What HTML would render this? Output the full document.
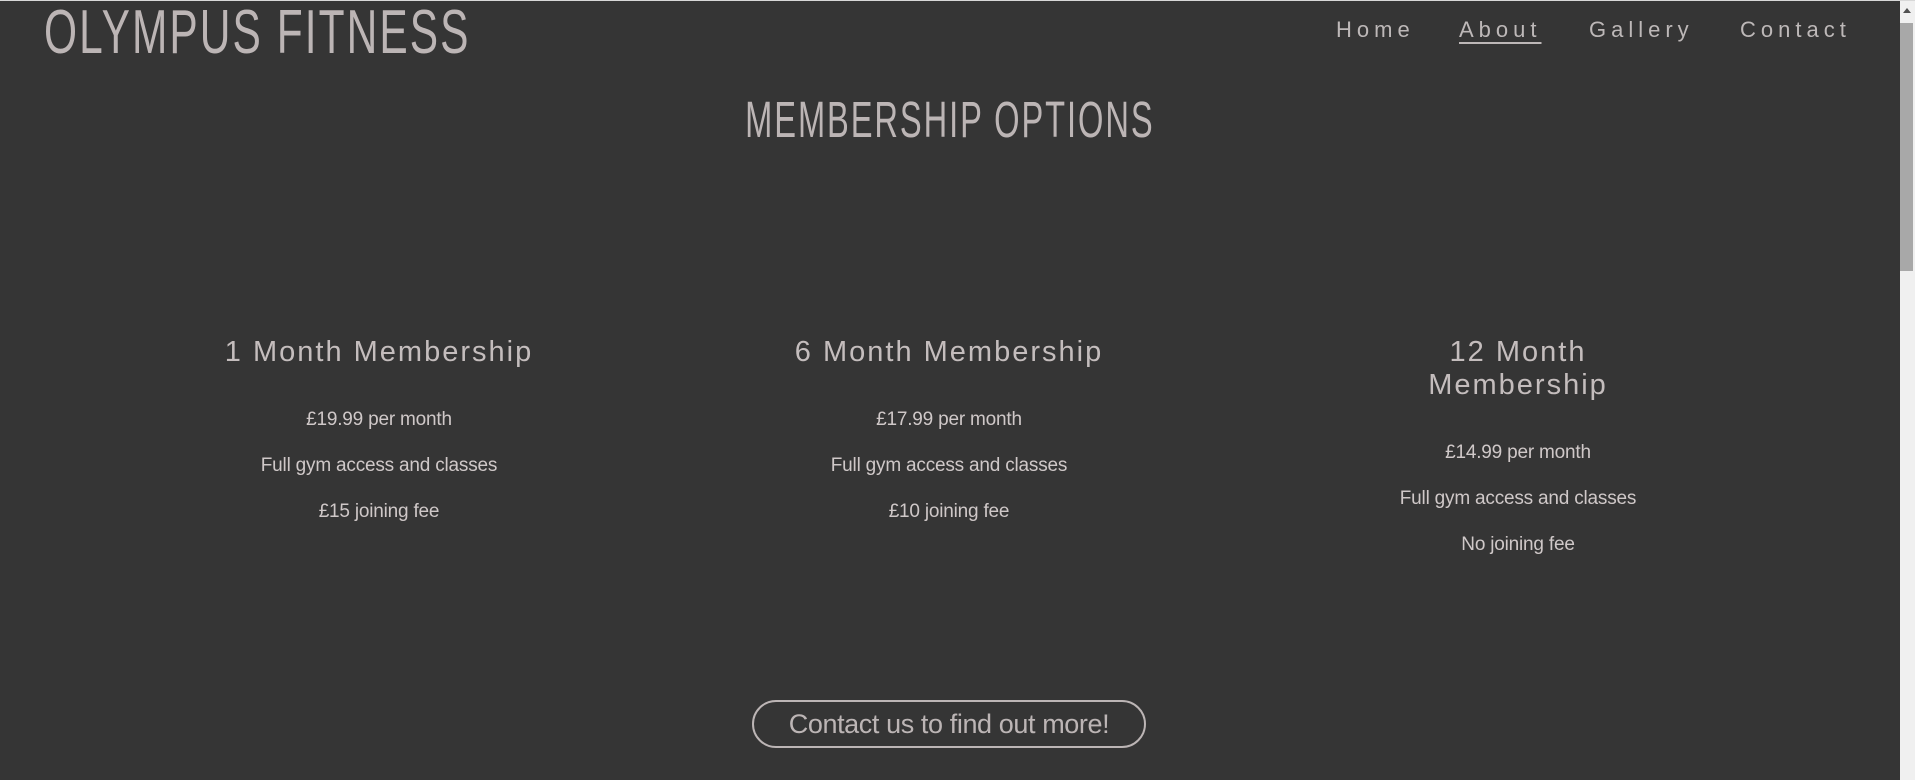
<!DOCTYPE html>
<html><head><meta charset="utf-8"><style>
html,body{margin:0;padding:0;}
body{width:1915px;height:779px;background:#353535;overflow:hidden;position:relative;font-family:"Liberation Sans",sans-serif;color:#c4bdbd;border-top:1px solid #d8d8d8;box-sizing:border-box;}
.abs{position:absolute;white-space:nowrap;}
.title{left:44px;top:-4px;font-size:62px;color:#bcb5b5;transform:scaleX(0.685);transform-origin:left top;letter-spacing:3px;}
.nav{top:16px;font-size:22px;letter-spacing:5px;color:#bdb8b8;}
.h1{left:0;width:1900px;text-align:center;top:89px;font-size:51px;color:#bcb5b5;}
.h1 span{display:inline-block;transform:scaleX(0.64);letter-spacing:3px;}
.col{position:absolute;top:335px;width:420px;text-align:center;}
.col h2{font-weight:normal;font-size:29px;letter-spacing:2px;margin:0 0 28px;line-height:33px;color:#c4bdbd;}
.col p{margin:0;font-size:19px;line-height:46px;letter-spacing:-0.2px;color:#cfc8c8;}
.btn{left:752px;top:699px;width:390px;height:44px;border:2px solid #bcb5b5;border-radius:24px;text-align:center;line-height:44px;font-size:27px;color:#bcb5b5;letter-spacing:-0.4px;}
.sb{position:absolute;right:0;top:0;width:15px;height:779px;background:#f0f0f0;}
.thumb{position:absolute;right:2px;top:22px;width:13px;height:248px;background:#a8a8a8;}
</style></head><body>
<div class="abs title">OLYMPUS FITNESS</div>
<div class="abs nav" style="left:1336px">Home</div>
<div class="abs nav" style="left:1459px;text-decoration:underline;text-underline-offset:5px">About</div>
<div class="abs nav" style="left:1589px">Gallery</div>
<div class="abs nav" style="left:1740px">Contact</div>
<div class="abs h1"><span>MEMBERSHIP OPTIONS</span></div>
<div class="col" style="left:169px"><h2>1 Month Membership</h2><p>£19.99 per month</p><p>Full gym access and classes</p><p>£15 joining fee</p></div>
<div class="col" style="left:739px"><h2>6 Month Membership</h2><p>£17.99 per month</p><p>Full gym access and classes</p><p>£10 joining fee</p></div>
<div class="col" style="left:1308px"><h2>12 Month<br>Membership</h2><p>£14.99 per month</p><p>Full gym access and classes</p><p>No joining fee</p></div>
<div class="abs btn">Contact us to find out more!</div>
<div class="sb"><div class="thumb"></div><div style="position:absolute;left:3px;top:7px;width:0;height:0;border-left:4px solid transparent;border-right:4px solid transparent;border-bottom:5px solid #505050"></div></div>
</body></html>
